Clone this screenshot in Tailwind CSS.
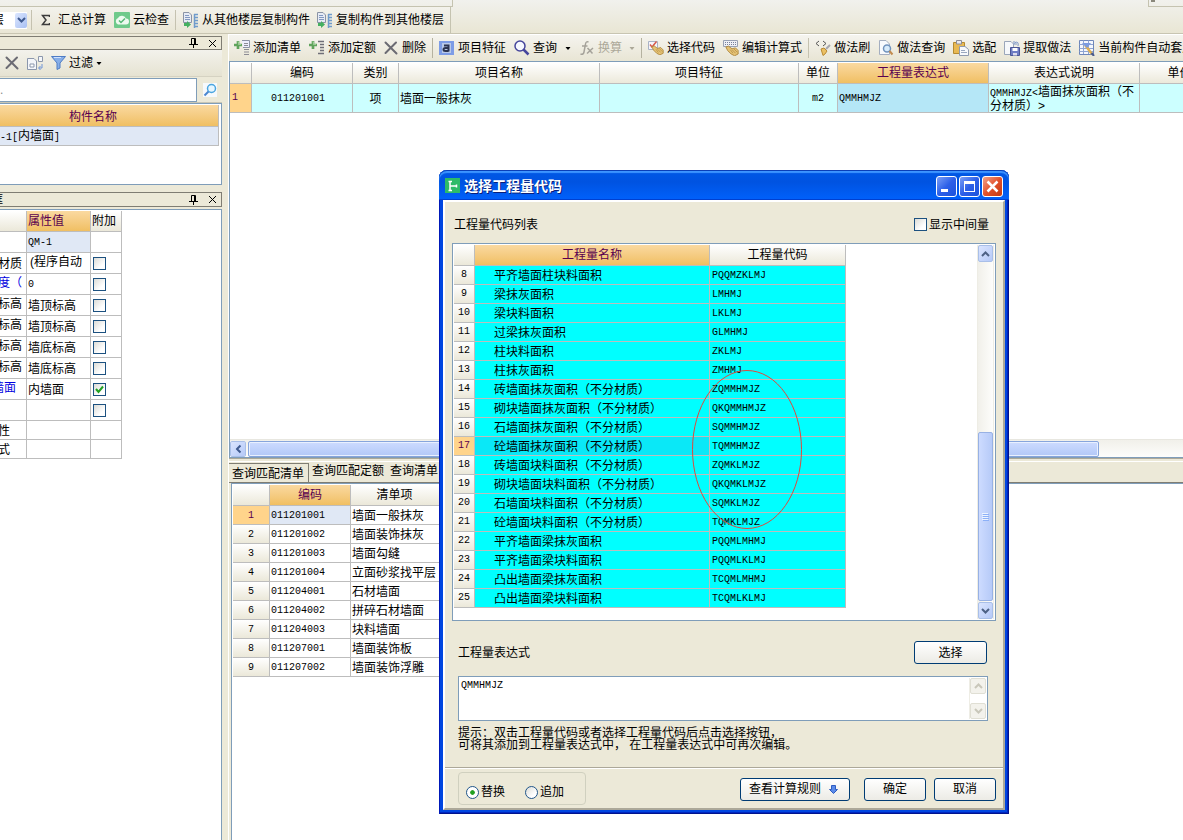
<!DOCTYPE html>
<html lang="zh-CN">
<head>
<meta charset="utf-8">
<title>选择工程量代码</title>
<script src="https://cdn.jsdelivr.net/npm/@tailwindcss/browser@4"></script>
</head>
<body class="relative flex h-screen flex-col overflow-hidden bg-[#ece9d8] font-['Liberation_Sans','Noto_Sans_CJK_SC',sans-serif] text-[12px] leading-[14px] text-black [&_button]:whitespace-nowrap">

<svg class="hidden">
  <symbol id="x" viewBox="0 0 14 14"><path d="M1.500 1.500L12.500 12.500M12 1.500L1.500 12" stroke="#6b6b73" stroke-width="2" stroke-linecap="round"/></symbol>
  <symbol id="pin" viewBox="0 0 9 10"><path d="M2.500 6V.500H6.500V6M5.500 1V6M0 6.500H9M4.500 7V10" fill="none" stroke="#000"/></symbol>
  <symbol id="close" viewBox="0 0 9 9"><path d="M1 1L8 8M8 1L1 8" stroke="#000"/></symbol>
  <symbol id="down" viewBox="0 0 9 6"><path d="M1 1L4.500 4.500L8 1" fill="none" stroke="currentColor" stroke-width="2"/></symbol>
  <symbol id="tri" viewBox="0 0 7 4"><path d="M0 0H7L3.500 4Z" fill="currentColor"/></symbol>
  <symbol id="plus" viewBox="0 0 9 9"><path d="M3 0H6V3H9V6H6V9H3V6H0V3H3Z" fill="#5fa35c"/><path d="M4 1H5V4H8" fill="none" stroke="#a5d3a0"/></symbol>
  <symbol id="copyf" viewBox="0 0 17 16"><path d="M1.500 .500H7L9.500 3V10.500H1.500Z" fill="#e6ebf5" stroke="#8a93a5"/><path d="M3 3.500H7M3 5.500H8M3 7.500H8" stroke="#8298c0"/><path d="M2 11H5V9L9 12.500L5 16V14H2Z" fill="#45b060"/><path d="M12.500 2V16M12 2.500H16M12 5.500H16M12 8.500H16M12 11.500H16M12 14.500H16" stroke="#6f9bcb" fill="none" stroke-width="1.500"/></symbol>
  <symbol id="hand" viewBox="0 0 16 12"><path d="M1 2L4 1L8 4L12 3L15 6L15 10L11 12L7 10L3 6Z" fill="#e5c274" stroke="#ab8338"/><path d="M8 5L12 9M10 4L14 8M6 5L9 9" stroke="#b8924a"/></symbol>
</svg>

<header class="flex h-[34px] shrink-0 flex-col border-b border-[#c8c5b2] bg-linear-to-b from-[#f1f1ed] to-[#e9e6d4]">
  <div class="flex h-[7px] items-start justify-between">
    <div class="h-[7px] w-[453px] border-r border-b border-[#c5c3b0]"></div>
    <div class="h-[7px] w-[35px] border-b border-l border-[#c5c3b0] pl-0.5"><div class="h-0.5 w-1 bg-[#8a887c]"></div></div>
  </div>
  <div class="flex h-[26px] w-[451px] items-center border-r border-[#c5c3b0] bg-linear-to-b from-[#f3f2ec] to-[#e9e6d5]">
    <div class="flex h-[17px] w-[27px] items-center justify-between overflow-hidden bg-white">
      <span class="-ml-[8px]">层</span>
      <button aria-label="选择楼层" class="grid h-[15px] w-[12px] place-items-center rounded-xs bg-linear-to-br from-[#dbe6ff] to-[#a9c0f2] text-[#3f5a8f]"><svg class="h-1.5 w-[9px]"><use href="#down"/></svg></button>
    </div>
    <i class="ml-1 h-5 w-px bg-[#c5c2b0]"></i>
    <button class="ml-[9px] flex items-center gap-2"><svg class="h-3 w-[9px]" viewBox="0 0 9 12"><path d="M8.500 3V1.500H1.500L5 6L1.500 10.500H8.500V9" fill="none" stroke="#3c3c3c" stroke-width="1.500"/></svg>汇总计算</button>
    <button class="ml-2 flex items-center gap-[3px]"><svg class="size-4" viewBox="0 0 16 16"><rect width="16" height="16" rx="1" fill="#6fca8b"/><path d="M4 12.500A3.500 3.500 0 0 1 4 6A4.500 4.500 0 0 1 12 6.500A3 3 0 0 1 12 12.500Z" fill="#eefaf0"/><path d="M5 8.500L7 10.500L11 6.500" fill="none" stroke="#55b874" stroke-width="1.500"/></svg>云检查</button>
    <i class="ml-1.5 h-5 w-px bg-[#c5c2b0]"></i>
    <button class="ml-1.5 flex items-center gap-[3px]"><svg class="h-4 w-[17px]"><use href="#copyf"/></svg>从其他楼层复制构件</button>
    <button class="ml-1.5 flex items-center gap-[3px]"><svg class="h-4 w-[17px]"><use href="#copyf"/></svg>复制构件到其他楼层</button>
  </div>
</header>

<main class="flex min-h-0 flex-1">
  <aside class="flex w-[222px] shrink-0 flex-col pt-0.5">
    <div class="flex h-[14px] shrink-0 items-center justify-end gap-2.5 border border-l-0 border-[#7f7d73] pr-1">
      <button aria-label="固定"><svg class="h-2.5 w-[9px]"><use href="#pin"/></svg></button>
      <button aria-label="关闭"><svg class="size-[9px]"><use href="#close"/></svg></button>
    </div>
    <div class="flex h-[27px] shrink-0 items-center border-b border-[#d5d2c2] bg-linear-to-b from-[#f3f2ec] to-[#e6e3d2] pl-[5px]">
      <button aria-label="删除构件"><svg class="size-[14px]"><use href="#x"/></svg></button>
      <button aria-label="复制构件" class="ml-2"><svg class="size-4" viewBox="0 0 16 16" fill="#f4f6fa" stroke="#8b97ac"><path d="M.500 3.500H7L9.500 6V14.500H.500Z"/><path d="M3 9H7V12H3Z" fill="#fff"/><path d="M11.500 1.500H15.500V6.500H11.500Z"/><path d="M15 9V13H12M13.500 11L11.500 13L13.500 15" fill="none" stroke="#6f94d8"/></svg></button>
      <button class="ml-2 flex items-center gap-[3px]"><svg class="h-3.5 w-[15px]" viewBox="0 0 15 14"><path d="M.500 .500H14.500L9 7V12L6 13.500V7Z" fill="#86aee8" stroke="#4f7cc4"/><path d="M3 1.500H10" stroke="#cfe2ff"/></svg>过滤<svg class="h-[3px] w-1.5" viewBox="0 0 7 4"><use href="#tri"/></svg></button>
    </div>
    <div class="flex h-[26px] shrink-0 items-center border-b border-[#c9c6b5]">
      <input aria-label="搜索构件" value="." class="h-6 w-[197px] border border-l-0 border-[#7f9db9] bg-white text-[12px] text-[#8a8a8a] outline-none">
      <button aria-label="搜索" class="ml-1.5"><svg class="size-[14px]" viewBox="0 0 14 14"><rect width="14" height="14" fill="#f6f9fc"/><circle cx="8.500" cy="5.500" r="4" fill="#e6f6ff" stroke="#4aa5e0" stroke-width="1.500"/><path d="M5.500 8.500L1.500 12.500" stroke="#4a86d0" stroke-width="2"/></svg></button>
    </div>
    <div class="h-[82px] shrink-0 overflow-hidden border border-l-0 border-[#7f9db9] bg-white pt-px pr-0.5">
      <table class="w-full table-fixed border-separate border-spacing-0 [&_td]:border-r [&_td]:border-b [&_td]:border-[#bdbdbd] [&_th]:border-r [&_th]:border-b [&_th]:border-[#bdbdbd]">
        <tr class="h-[22px]"><th class="bg-linear-to-b from-[#fad9a0] to-[#f0bf62] pt-0.5 pr-8 pb-0 font-normal text-[#59004f]">构件名称</th></tr>
        <tr class="h-[19px]"><td class="bg-[#e0e8f5] px-0 pt-0.5 pb-0"><span class="font-['Liberation_Mono',monospace] text-[10px]">-1[</span>内墙面<span class="font-['Liberation_Mono',monospace] text-[10px]">]</span></td></tr>
      </table>
    </div>
    <div class="mt-[7px] flex h-[15px] shrink-0 items-center justify-between overflow-hidden border border-l-0 border-[#7f7d73] pr-1">
      <span class="-ml-[9px]">框</span>
      <span class="flex items-center gap-2.5">
        <button aria-label="固定"><svg class="h-2.5 w-[9px]"><use href="#pin"/></svg></button>
        <button aria-label="关闭"><svg class="size-[9px]"><use href="#close"/></svg></button>
      </span>
    </div>
    <div class="mt-0.5 min-h-0 flex-1 overflow-hidden border-t border-r border-[#7f9db9] bg-white pt-px">
      <table class="w-[122px] table-fixed border-separate border-spacing-0 whitespace-nowrap [&_input]:col-start-1 [&_input]:row-start-1 [&_input]:size-[13px] [&_input]:appearance-none [&_input]:border [&_input]:border-[#1c5180] [&_input]:bg-linear-to-br [&_input]:from-[#dcdcd7] [&_input]:to-white [&_input]:to-70% [&_label]:ml-0.5 [&_label]:grid [&_td]:overflow-hidden [&_td]:border-r [&_td]:border-b [&_td]:border-[#bdbdbd] [&_td]:px-0 [&_td]:pt-px [&_td]:pb-0 [&_td:nth-child(2)]:pl-px [&_th]:border-r [&_th]:border-b [&_th]:border-[#bdbdbd] [&_th]:p-0 [&_th]:text-left [&_th]:font-normal">
        <colgroup><col class="w-[27px]"><col class="w-[64px]"><col class="w-[31px]"></colgroup>
        <tr class="h-[21px]"><th class="bg-linear-to-b from-white to-[#ebe8d9]"></th><th class="bg-linear-to-b from-[#fad9a0] to-[#f0bf62] text-[#59004f]"><div class="pl-px">属性值</div></th><th class="bg-linear-to-b from-white to-[#ebe8d9]"><div class="pl-px">附加</div></th></tr>
        <tr class="h-[21px]"><td></td><td class="bg-[#e0e8f5] font-['Liberation_Mono',monospace] text-[10px]">QM-1</td><td></td></tr>
        <tr class="h-[21px]"><td><div class="-ml-0.5">材质</div></td><td><div class="pb-1 pl-0.5">(程序自动</div></td><td><label><input type="checkbox" aria-label="材质附加"></label></td></tr>
        <tr class="h-[21px]"><td class="text-[#0000e0]"><div class="-ml-0.5 pb-1">度（</div></td><td class="font-['Liberation_Mono',monospace] text-[10px]">0</td><td><label><input type="checkbox" aria-label="厚度附加"></label></td></tr>
        <tr class="h-[21px]"><td><div class="-ml-0.5 pb-1">标高</div></td><td>墙顶标高</td><td><label><input type="checkbox" aria-label="起点顶标高附加"></label></td></tr>
        <tr class="h-[21px]"><td><div class="-ml-0.5 pb-1">标高</div></td><td>墙顶标高</td><td><label><input type="checkbox" aria-label="终点顶标高附加"></label></td></tr>
        <tr class="h-[21px]"><td><div class="-ml-0.5 pb-1">标高</div></td><td>墙底标高</td><td><label><input type="checkbox" aria-label="起点底标高附加"></label></td></tr>
        <tr class="h-[21px]"><td><div class="-ml-0.5 pb-1">标高</div></td><td>墙底标高</td><td><label><input type="checkbox" aria-label="终点底标高附加"></label></td></tr>
        <tr class="h-[21px]"><td class="text-[#0000e0]"><div class="-ml-2 pb-1">墙面</div></td><td>内墙面</td><td><label><input type="checkbox" checked aria-label="墙面附加"><svg class="pointer-events-none col-start-1 row-start-1 size-[13px]" viewBox="0 0 13 13"><path d="M3 6L5.500 9L10 3.500" fill="none" stroke="#21a121" stroke-width="2"/></svg></label></td></tr>
        <tr class="h-[21px]"><td></td><td></td><td><label><input type="checkbox" aria-label="备注附加"></label></td></tr>
        <tr class="h-[19px]"><td><div class="-ml-0.5">性</div></td><td></td><td></td></tr>
        <tr class="h-[19px]"><td><div class="-ml-0.5">式</div></td><td></td><td></td></tr>
      </table>
    </div>
  </aside>

  <section class="ml-1.5 grid min-w-0 flex-1 grid-cols-1 grid-rows-[427fr_379fr] border-t border-l border-white">
    <div class="flex min-h-0 min-w-0 flex-col">
      <nav class="flex h-[26px] shrink-0 items-center gap-2 overflow-hidden bg-linear-to-b from-[#f5f4ef] to-[#e8e5d4] pl-[5px] [&_button]:flex [&_button]:shrink-0 [&_button]:items-center [&_button]:gap-[3px]">
        <button><svg class="size-4" viewBox="0 0 16 16"><use href="#plus" y="1" width="8" height="8"/><path d="M8 .500H15.500V7.500H9" fill="#eef" stroke="#8c93a5"/><path d="M10 3.500H14M10 5.500H14M10 9.500H15M10 12H15M10 14.500H15" stroke="#8c8c94"/></svg>添加清单</button>
        <button><svg class="size-4" viewBox="0 0 16 16"><use href="#plus" y="1" width="8" height="8"/><path d="M9 1.500H15M11 4.500H15M11 7.500H15M11 10.500H15M9 13.500H15" stroke="#6f6f78" stroke-width="1.500"/></svg>添加定额</button>
        <button><svg class="mr-px size-[14px]"><use href="#x"/></svg>删除</button>
        <i class="-mx-0.5 h-5 w-px shrink-0 bg-[#b5b2a0]"></i>
        <button><svg class="size-4" viewBox="0 0 16 16"><rect y="1" width="15" height="14" fill="#7d9ce6"/><rect x="3" y="3" width="9" height="10" fill="#b9c9e8"/><path d="M5 5.500H9.500V11.500M9.500 8H6.500Q4.500 8 4.500 9.500T6.500 11H9.500" fill="none" stroke="#2b3350" stroke-width="2"/></svg>项目特征</button>
        <button><svg class="size-4" viewBox="0 0 16 16"><circle cx="6" cy="6" r="5" fill="#f6f8ff" stroke="#46469c" stroke-width="1.500"/><path d="M9.500 9.500L14.500 14.500" stroke="#46469c" stroke-width="2.500"/></svg>查询<svg class="ml-[5px] h-[3px] w-[6px]" viewBox="0 0 7 4"><use href="#tri"/></svg></button>
        <button class="text-[#aca899]" disabled><svg class="size-4" viewBox="0 0 16 16" fill="none" stroke="#a5a29a" stroke-width="1.500"><path d="M9.500 2Q7 1 6.500 4L5 12Q4.500 15 1.500 14M3 6H8.500M8.500 8L13.500 13.500M14 8L8 13.500"/></svg>换算<svg class="ml-1 h-[3px] w-[6px]" viewBox="0 0 7 4"><use href="#tri"/></svg></button>
        <i class="-mx-0.5 h-5 w-px shrink-0 bg-[#b5b2a0]"></i>
        <button><svg class="size-4" viewBox="0 0 16 16"><path d="M.500 1.500H9.500V9.500H.500Z" fill="#f5f5fb" stroke="#a8b2c6"/><path d="M2 4.500L4 7L8.500 1.500" fill="none" stroke="#d75a4a" stroke-width="1.500"/><use href="#hand" x="3" y="5" width="13" height="10"/></svg>选择代码</button>
        <button><svg class="size-4" viewBox="0 0 16 16"><path d="M.500 .500H14.500V6.500H.500Z" fill="#eef0f6" stroke="#98a1b4"/><path d="M2 2.500H13M2 4.500H13" stroke="#77809a" stroke-dasharray="1 1"/><use href="#hand" x="2" y="5" width="14" height="11"/></svg>编辑计算式</button>
        <i class="-mx-0.5 h-5 w-px shrink-0 bg-[#c5c2b0]"></i>
        <button><svg class="size-4" viewBox="0 0 16 16"><path d="M4 1L1 3.500L4 6M8 1L11 3.500L8 6" fill="none" stroke="#555"/><path d="M15 5L11 9" stroke="#a6a6ae" stroke-width="2"/><path d="M6 9L9 8L12 11L10 14L8 15.500Z" fill="#ebc064" stroke="#b98b35"/></svg>做法刷</button>
        <button><svg class="size-4" viewBox="0 0 16 16"><path d="M1.500 .500H8L11.500 4V14.500H1.500Z" fill="#f8fafd" stroke="#a4aec0"/><circle cx="9" cy="8.500" r="3.500" fill="#d7ebfb" stroke="#7193bd" stroke-width="1.500"/><path d="M11.500 11L14.500 14.500" stroke="#c28b4f" stroke-width="2"/></svg>做法查询</button>
        <button><svg class="size-4" viewBox="0 0 16 16"><path d="M.500 2.500H11.500V13.500H.500Z" fill="#e8b953" stroke="#b58a30"/><path d="M3.500 .500H8.500V4H3.500Z" fill="#e9e9ee" stroke="#8d8d98"/><path d="M6.500 6.500H12L15.500 9.500V15.500H6.500Z" fill="#f7f9fc" stroke="#8e9ab0"/><path d="M8 10.500H12M8 12.500H14" stroke="#9aa8c0"/></svg>选配</button>
        <button><svg class="size-4" viewBox="0 0 16 16"><path d="M.500 1.500H7L9.500 4V14.500H.500Z" fill="#f6f8fb" stroke="#9aa6ba"/><path d="M6.500 7.500H15.500V15.500H6.500Z" fill="#6f7cc4" stroke="#4b5694"/><path d="M8.500 8H13.500V11H8.500Z" fill="#fff"/><path d="M9 13H13V15.500H9Z" fill="#dde"/><path d="M11 2.500Q15 1 14 6M10 1V4H13" fill="none" stroke="#7b96c8"/></svg>提取做法</button>
        <button><svg class="size-4" viewBox="0 0 16 16"><path d="M.500 .500H14.500V14.500H.500Z" fill="#f4f7fd" stroke="#6e87ba"/><path d="M.500 4.500H14M.500 8.500H14M.500 11.500H14M4.500 .500V14M9.500 .500V14" stroke="#8fa5d2"/><path d="M6 5L13 14" stroke="#e0b050" stroke-width="2.500"/><path d="M12.500 13L15 16" stroke="#4a5a8a" stroke-width="2"/><path d="M3 3H12L8 8Z" fill="#7b9be0"/></svg>当前构件自动套用做法</button>
      </nav>
      <div class="flex min-h-0 flex-1 flex-col justify-between overflow-hidden border-y border-l border-[#7f9db9] bg-white pt-px">
        <table class="w-[990px] table-fixed border-separate border-spacing-0 [&_td]:border-r [&_td]:border-b [&_td]:border-[#bdbdbd] [&_td]:bg-[#ccffff] [&_td]:px-px [&_td]:pt-px [&_td]:pb-0 [&_th]:border-r [&_th]:border-b [&_th]:border-[#bdbdbd] [&_th]:p-0 [&_th]:font-normal">
          <colgroup><col class="w-[22px]"><col class="w-[101px]"><col class="w-[46px]"><col class="w-[201px]"><col class="w-[199px]"><col class="w-[39px]"><col class="w-[151px]"><col class="w-[151px]"><col class="w-[80px]"></colgroup>
          <thead class="bg-linear-to-b from-white to-[#ebe8d9]">
            <tr class="h-[21px]"><th></th><th>编码</th><th>类别</th><th>项目名称</th><th>项目特征</th><th>单位</th><th class="bg-linear-to-b from-[#fad9a0] to-[#f0bf62] text-[#59004f]">工程量表达式</th><th>表达式说明</th><th>单价</th></tr>
          </thead>
          <tr class="h-[29px]"><th class="bg-[#ffd48b] font-['Liberation_Mono',monospace] text-[10px] text-[#59004f]"><div class="pl-0.5 text-left">1</div></th><td class="text-center font-['Liberation_Mono',monospace] text-[10px]"><div class="pt-px pr-2">011201001</div></td><td class="text-center">项</td><td>墙面一般抹灰</td><td></td><td class="text-center font-['Liberation_Mono',monospace] text-[10px]">m2</td><td class="font-['Liberation_Mono',monospace] text-[10px] [&&]:bg-[#b5e7f7]">QMMHMJZ</td><td class="leading-[12px]"><span class="font-['Liberation_Mono',monospace] text-[10px]">QMMHMJZ&lt;</span>墙面抹灰面积（不<br>分材质）&gt;</td><td></td></tr>
        </table>
        <div class="flex h-[18px] items-center gap-0.5 border-t border-[#e8e7e0] bg-linear-to-b from-[#f1f0ea] to-[#fdfdfb]">
          <button aria-label="向左滚动" class="grid h-4 w-4 place-items-center rounded-xs border border-white bg-linear-to-br from-[#dbe5ff] to-[#b5c9f7] text-[#3f5a8f] outline outline-[#a9bfe8] -outline-offset-1"><svg class="h-1.5 w-[9px] rotate-90"><use href="#down"/></svg></button>
          <div class="mr-[84px] h-4 flex-1 rounded-xs border border-[#87a5dc] bg-linear-to-b from-[#cddbff] to-[#b2c8f8] shadow-[inset_0_0_0_1px_#e9f0ff]"></div>
        </div>
      </div>
      <div class="h-[3px] shrink-0 border-t border-[#aca899] bg-[#ece9d8]"></div>
    </div>
    <div class="flex min-h-0 min-w-0 flex-col border-t border-white">
      <div role="tablist" class="flex h-[21px] shrink-0 items-start border-b border-[#7f7d73]">
        <button role="tab" aria-selected="true" class="mt-px h-5 border-t border-r border-[#7f7d73] pr-1 pl-[3px]">查询匹配清单</button>
        <button role="tab" class="ml-[3px] h-[17px]">查询匹配定额</button>
        <button role="tab" class="ml-[6px] h-[17px]">查询清单</button>
      </div>
      <div class="ml-0.5 min-h-0 flex-1 border-t border-l border-[#7f9db9] bg-white pt-px pl-px">
        <table class="w-[220px] table-fixed border-separate border-spacing-0 whitespace-nowrap [&_td]:border-r [&_td]:border-b [&_td]:border-[#bdbdbd] [&_td]:px-px [&_td]:pt-px [&_td]:pb-0 [&_td:nth-child(2)]:font-['Liberation_Mono',monospace] [&_td:nth-child(2)]:text-[10px] [&_th]:border-r [&_th]:border-b [&_th]:border-[#bdbdbd] [&_th]:bg-linear-to-b [&_th]:from-white [&_th]:to-[#ebe8d9] [&_th]:p-0 [&_th]:font-normal [&_tbody_td:first-child]:bg-linear-to-b [&_tbody_td:first-child]:from-white [&_tbody_td:first-child]:to-[#ebe8d9] [&_tbody_td:first-child]:text-center [&_tbody_td:first-child]:font-['Liberation_Mono',monospace] [&_tbody_td:first-child]:text-[10px] [&_tbody_tr]:h-[19px]">
          <colgroup><col class="w-[37px]"><col class="w-[81px]"><col class="w-[102px]"></colgroup>
          <thead><tr class="h-[21px]"><th></th><th class="from-[#fad9a0]! to-[#f0bf62]! text-[#59004f]">编码</th><th><div class="pr-3.5">清单项</div></th></tr></thead>
          <tbody>
            <tr><td class="from-[#ffd48b]! to-[#ffd48b]! text-[#59004f]">1</td><td class="bg-[#e0e8f5]">011201001</td><td>墙面一般抹灰</td></tr>
            <tr><td>2</td><td>011201002</td><td>墙面装饰抹灰</td></tr>
            <tr><td>3</td><td>011201003</td><td>墙面勾缝</td></tr>
            <tr><td>4</td><td>011201004</td><td>立面砂浆找平层</td></tr>
            <tr><td>5</td><td>011204001</td><td>石材墙面</td></tr>
            <tr><td>6</td><td>011204002</td><td>拼碎石材墙面</td></tr>
            <tr><td>7</td><td>011204003</td><td>块料墙面</td></tr>
            <tr><td>8</td><td>011207001</td><td>墙面装饰板</td></tr>
            <tr><td>9</td><td>011207002</td><td>墙面装饰浮雕</td></tr>
          </tbody>
        </table>
      </div>
    </div>
  </section>
</main>

<div role="dialog" aria-labelledby="dlg-title" class="absolute top-[170px] left-[439px] w-[570px] rounded-t-lg bg-[#0046e0] px-1 pb-1 shadow-[inset_1px_0_0_#0019b8,inset_-1px_-1px_0_#00138c,inset_-2px_-2px_0_#0025c0]">
  <div class="-mx-1 flex h-[30px] items-center gap-[3px] rounded-t-lg bg-linear-to-b from-[#0058e6] via-[#0053e1] via-40% to-[#0061fc] pr-1.5 pl-1.5 shadow-[inset_0_1px_0_#0a3fb8,inset_0_3px_1px_#3d95ff,inset_0_-1px_0_#0040d0]">
    <svg class="mt-0.5 size-4" viewBox="0 0 16 16"><rect width="15" height="15" fill="#2dbb68"/><path d="M5 3V13M3.500 3.500H7M3.500 12.500H7M5 8H12M11.500 6.500V9.500" fill="none" stroke="#fff" stroke-width="1.500"/></svg>
    <h1 id="dlg-title" class="mt-0.5 flex-1 text-[14px] leading-[18px] font-bold text-white [text-shadow:1px_1px_0_#0a1f7a]">选择工程量代码</h1>
    <div class="mt-[3px] flex gap-0.5 [&_button]:grid [&_button]:size-[21px] [&_button]:place-items-center [&_button]:rounded-[3px] [&_button]:border [&_button]:border-white">
      <button aria-label="最小化" class="bg-linear-to-br from-[#7c9df5] via-[#2d5fe8] to-[#1b52dc]"><svg class="size-[13px]" viewBox="0 0 13 13"><path d="M1 9H8V12H1Z" fill="#fff"/></svg></button>
      <button aria-label="最大化" class="bg-linear-to-br from-[#7c9df5] via-[#2d5fe8] to-[#1b52dc]"><svg class="size-[13px]" viewBox="0 0 13 13"><path d="M1 1H12V12H1ZM2 4V11H11V4Z" fill="#fff" fill-rule="evenodd"/></svg></button>
      <button aria-label="关闭" class="bg-linear-to-br from-[#f0a088] via-[#e2512b] to-[#c43a10]"><svg class="size-[13px]" viewBox="0 0 13 13"><path d="M1.500 1.500L11.500 11.500M11.500 1.500L1.500 11.500" stroke="#fff" stroke-width="2.500"/></svg></button>
    </div>
  </div>

  <div class="border-2 border-t-white border-r-[#aca899] border-b-[#aca899] border-l-white bg-[#ece9d8]">
    <div class="flex h-[41px] items-center justify-between pt-1 pr-[14px] pl-[9px]">
      <span>工程量代码列表</span>
      <label class="flex items-center gap-0.5"><input type="checkbox" class="size-[13px] appearance-none border border-[#1c5180] bg-linear-to-br from-[#dcdcd7] to-white to-70%">显示中间量</label>
    </div>

    <div class="mx-[7px] flex h-[378px] justify-between border border-[#7f9db9] bg-white p-px">
      <table class="h-px w-[392px] table-fixed border-separate border-spacing-0 whitespace-nowrap [&_tbody_td]:border-r [&_tbody_td]:border-b [&_tbody_td]:border-[#bdbdbd] [&_tbody_td]:bg-[#00ffff] [&_tbody_td]:px-0 [&_tbody_td]:pt-0.5 [&_tbody_td]:pb-0 [&_tbody_td:nth-child(2)]:pl-[19px] [&_tbody_td:nth-child(3)]:pt-px [&_tbody_td:nth-child(3)]:pl-0.5 [&_tbody_td:nth-child(3)]:font-['Liberation_Mono',monospace] [&_tbody_td:nth-child(3)]:text-[10px] [&_tbody_th]:bg-linear-to-b [&_tbody_th]:font-['Liberation_Mono',monospace] [&_tbody_th]:text-[10px] [&_tbody_tr]:h-[19px] [&_th]:border-r [&_th]:border-b [&_th]:border-[#bdbdbd] [&_th]:bg-linear-to-b [&_th]:from-white [&_th]:to-[#ebe8d9] [&_th]:p-0 [&_th]:font-normal">
        <colgroup><col class="w-[21px]"><col class="w-[235px]"><col class="w-[136px]"></colgroup>
        <thead><tr class="h-[21px]"><th></th><th class="from-[#fad9a0]! to-[#f0bf62]! text-[#59004f]">工程量名称</th><th>工程量代码</th></tr></thead>
        <tbody>
          <tr><th>8</th><td>平齐墙面柱块料面积</td><td>PQQMZKLMJ</td></tr>
          <tr><th>9</th><td>梁抹灰面积</td><td>LMHMJ</td></tr>
          <tr><th>10</th><td>梁块料面积</td><td>LKLMJ</td></tr>
          <tr><th>11</th><td>过梁抹灰面积</td><td>GLMHMJ</td></tr>
          <tr><th>12</th><td>柱块料面积</td><td>ZKLMJ</td></tr>
          <tr><th>13</th><td>柱抹灰面积</td><td>ZMHMJ</td></tr>
          <tr><th>14</th><td>砖墙面抹灰面积（不分材质）</td><td>ZQMMHMJZ</td></tr>
          <tr><th>15</th><td>砌块墙面抹灰面积（不分材质）</td><td>QKQMMHMJZ</td></tr>
          <tr><th>16</th><td>石墙面抹灰面积（不分材质）</td><td>SQMMHMJZ</td></tr>
          <tr><th class="from-[#ffd48b]! to-[#ffd48b]! text-[#59004f]">17</th><td class="bg-[#0ae8f7]!">砼墙面抹灰面积（不分材质）</td><td>TQMMHMJZ</td></tr>
          <tr><th>18</th><td>砖墙面块料面积（不分材质）</td><td>ZQMKLMJZ</td></tr>
          <tr><th>19</th><td>砌块墙面块料面积（不分材质）</td><td>QKQMKLMJZ</td></tr>
          <tr><th>20</th><td>石墙面块料面积（不分材质）</td><td>SQMKLMJZ</td></tr>
          <tr><th>21</th><td>砼墙面块料面积（不分材质）</td><td>TQMKLMJZ</td></tr>
          <tr><th>22</th><td>平齐墙面梁抹灰面积</td><td>PQQMLMHMJ</td></tr>
          <tr><th>23</th><td>平齐墙面梁块料面积</td><td>PQQMLKLMJ</td></tr>
          <tr><th>24</th><td>凸出墙面梁抹灰面积</td><td>TCQMLMHMJ</td></tr>
          <tr><th>25</th><td>凸出墙面梁块料面积</td><td>TCQMLKLMJ</td></tr>
        </tbody>
      </table>
      <div class="flex w-[17px] flex-col border-x border-[#eeede5] bg-linear-to-r from-[#f1f0ea] to-[#fdfdfb]">
        <button aria-label="向上滚动" class="grid h-[17px] place-items-center rounded-xs border border-[#a9bfe8] bg-linear-to-br from-[#dbe5ff] to-[#b5c9f7] text-[#4d6185]"><svg class="h-1.5 w-[9px] rotate-180"><use href="#down"/></svg></button>
        <div class="flex-1"></div>
        <div class="grid h-[169px] place-items-center rounded-xs border border-[#98b1e4] bg-linear-to-r from-[#cddbff] to-[#b6caf8]"><svg class="h-2 w-[7px]" viewBox="0 0 7 8"><path d="M0 .500H6M0 2.500H6M0 4.500H6M0 6.500H6" stroke="#eef4fe"/><path d="M1 1.500H7M1 3.500H7M1 5.500H7M1 7.500H7" stroke="#8cb0f8"/></svg></div>
        <button aria-label="向下滚动" class="mt-px grid h-[17px] place-items-center rounded-xs border border-[#a9bfe8] bg-linear-to-br from-[#dbe5ff] to-[#b5c9f7] text-[#4d6185]"><svg class="h-1.5 w-[9px]"><use href="#down"/></svg></button>
      </div>
    </div>

    <div class="pr-[15px] pl-[13px]">
      <div class="flex items-center justify-between pt-5 pr-px pb-3">
        <label for="expr">工程量表达式</label>
        <button class="h-[23px] w-[73px] rounded-[3px] border border-[#003c74] bg-linear-to-b from-white to-[#ecebe5]">选择</button>
      </div>
      <div class="flex h-[45px] border border-[#7f9db9] bg-white p-px">
        <textarea id="expr" class="flex-1 resize-none overflow-hidden bg-white px-px pt-px font-['Liberation_Mono',monospace] text-[10px] leading-[14px] outline-none">QMMHMJZ</textarea>
        <div class="flex w-[17px] flex-col justify-between border-l border-[#eeede5] text-[#c9c7ba]">
          <button disabled aria-label="上滚" class="grid h-4 place-items-center rounded-xs border border-[#e0dfd4] bg-[#f3f2ec]"><svg class="h-1.5 w-[9px] rotate-180"><use href="#down"/></svg></button>
          <button disabled aria-label="下滚" class="grid h-4 place-items-center rounded-xs border border-[#e0dfd4] bg-[#f3f2ec]"><svg class="h-1.5 w-[9px]"><use href="#down"/></svg></button>
        </div>
      </div>
      <p class="mt-1.5 leading-[12px]">提示：双击工程量代码或者选择工程量代码后点击选择按钮，<br>可将其添加到工程量表达式中， 在工程量表达式中可再次编辑。</p>
    </div>

    <div class="mt-4 flex h-[41px] items-center border-t border-[#aca899] pr-[7px] pl-[13px] shadow-[inset_0_1px_0_#fff]">
      <fieldset class="flex h-[33px] w-[128px] items-center gap-5 rounded-sm border border-[#d0d0bf] pt-2 pl-[7px] [&_input]:size-[13px] [&_input]:appearance-none [&_input]:rounded-full [&_input]:border [&_input]:border-[#21568b] [&_label]:flex [&_label]:items-center [&_label]:gap-0.5">
        <label><input type="radio" name="mode" checked class="bg-radial from-[#21a121] from-25% to-white to-35%">替换</label>
        <label><input type="radio" name="mode" class="bg-linear-to-br from-[#dcdcd7] to-white to-70%">追加</label>
      </fieldset>
      <div class="flex-1"></div>
      <button class="mt-0.5 flex h-[23px] w-[110px] items-center gap-2 rounded-[3px] border border-[#003c74] bg-linear-to-b from-white to-[#ecebe5] pl-2">查看计算规则<svg class="h-[9px] w-[9px]" viewBox="0 0 9 9"><path d="M2.500 .500H6.500V4.500H8.500L4.500 8.500L.500 4.500H2.500Z" fill="#5b8bea" stroke="#2f5cc0"/></svg></button>
      <button class="mt-0.5 ml-3.5 h-[23px] w-[62px] rounded-[3px] border border-[#003c74] bg-linear-to-b from-white to-[#ecebe5]">确定</button>
      <button class="mt-0.5 ml-2 h-[23px] w-[62px] rounded-[3px] border border-[#003c74] bg-linear-to-b from-white to-[#ecebe5]">取消</button>
    </div>
  </div>

  <svg class="pointer-events-none absolute top-[200px] left-[253px] h-[160px] w-[111px]" viewBox="0 0 111 160"><ellipse cx="55" cy="79.500" rx="54.500" ry="79" fill="none" stroke="#e0483c"/></svg>
</div>
</body>
</html>
